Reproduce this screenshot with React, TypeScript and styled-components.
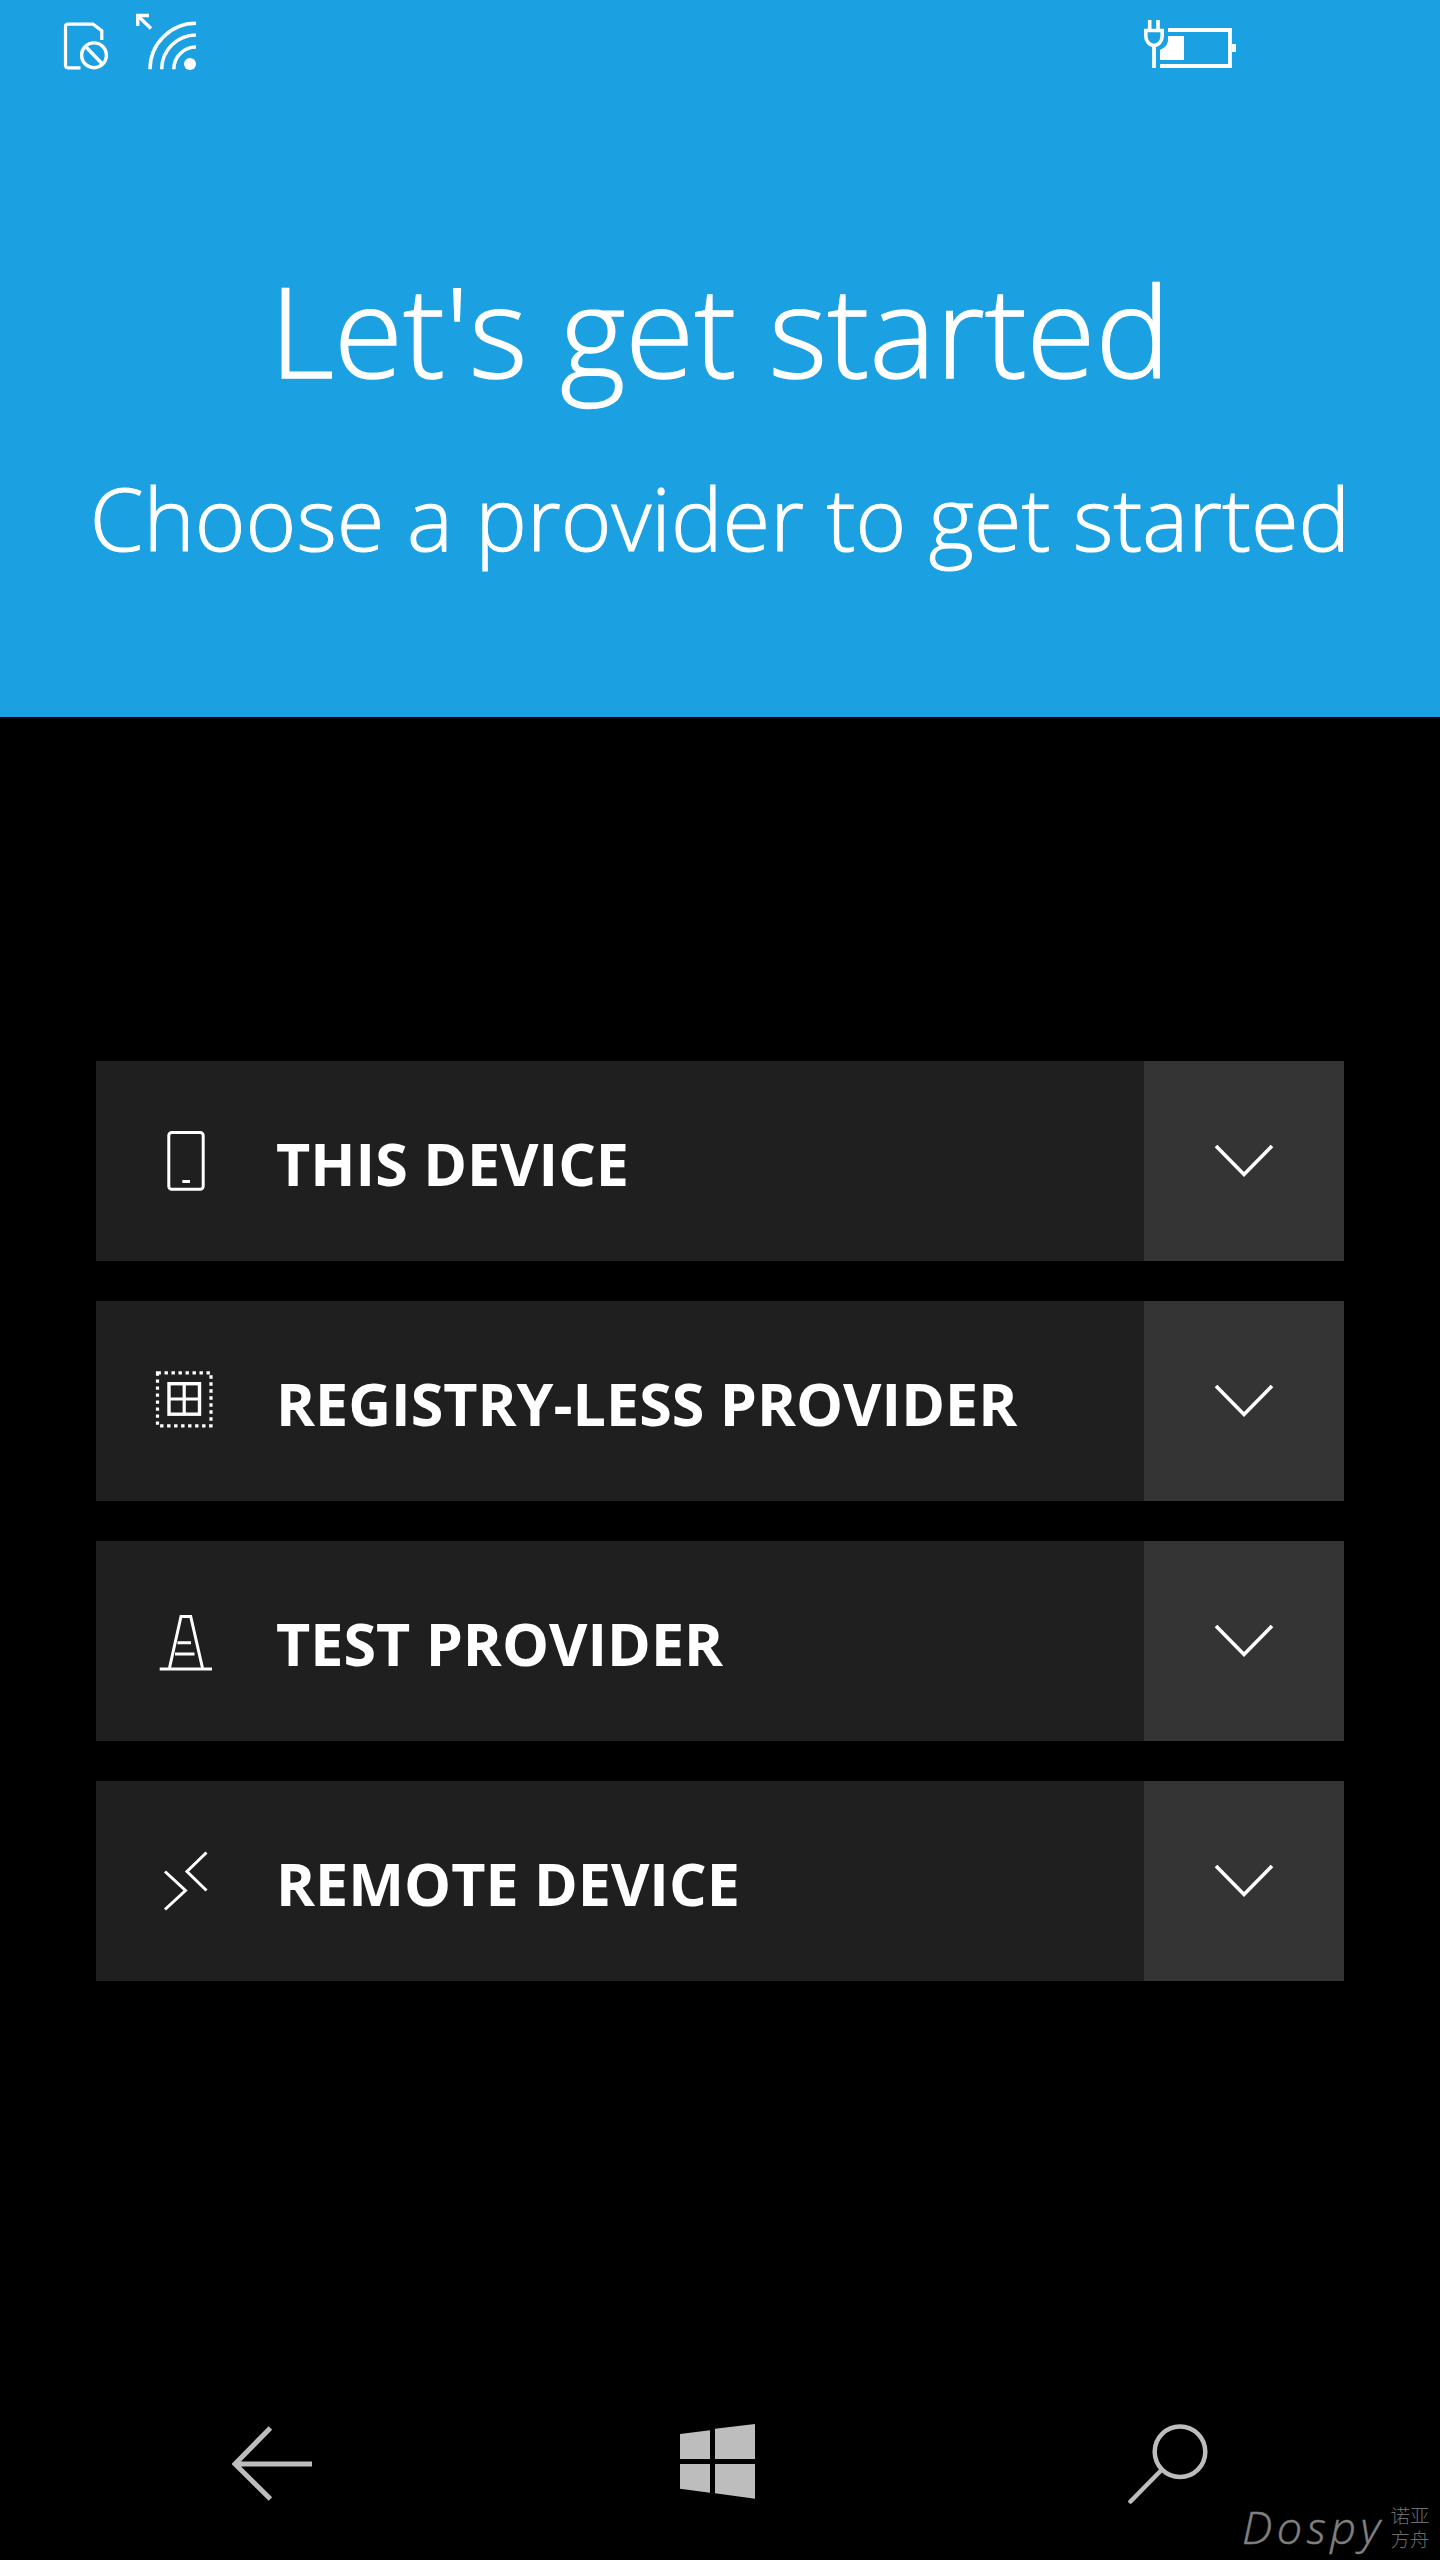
import React from "react";
import styled, { createGlobalStyle } from "styled-components";

const Global = createGlobalStyle`
  html, body { margin: 0; padding: 0; background: #000; }
  * { box-sizing: border-box; }
`;

const Page = styled.div`
  width: 1440px;
  height: 2560px;
  background: #000;
  display: flex;
  flex-direction: column;
  position: relative;
  overflow: hidden;
  font-family: "Open Sans", "Liberation Sans", sans-serif;
  color: #fff;
`;

const Header = styled.header`
  height: 717px;
  flex: none;
  background: #1ba1e2;
  display: flex;
  flex-direction: column;
  align-items: center;
`;

const StatusBar = styled.div`
  width: 100%;
  height: 80px;
  padding: 0 200px 0 60px;
  display: flex;
  justify-content: space-between;
`;

const StatusIcon = styled.svg`
  display: block;
  height: 80px;
  fill: none;
  stroke: #fff;
`;

const Title = styled.h1`
  margin: 165px 0 0;
  font-size: 125.5px;
  line-height: 170px;
  font-weight: 300;
  -webkit-text-stroke: 1.4px #fff;
  white-space: nowrap;
`;

const Subtitle = styled.h2`
  margin: 43px 0 0;
  font-size: 86.7px;
  line-height: 118px;
  font-weight: 300;
  -webkit-text-stroke: 1px #fff;
  white-space: nowrap;
`;

const List = styled.main`
  padding: 344px 96px 0;
  display: flex;
  flex-direction: column;
  gap: 40px;
`;

const Card = styled.div`
  height: 200px;
  background: #1f1f1f;
  display: flex;
  align-items: stretch;
`;

const CardIcon = styled.svg`
  flex: none;
  width: 180px;
  height: 200px;
  fill: none;
  stroke: #fff;
  stroke-width: 3;
`;

const Label = styled.span`
  flex: 1;
  align-self: center;
  padding-top: 4px;
  font-size: 59.2px;
  font-weight: 700;
  line-height: 82px;
  white-space: nowrap;
`;

const Expander = styled.div`
  flex: none;
  width: 200px;
  background: #343434;
  display: flex;
  align-items: center;
  justify-content: center;
`;

const Chevron = styled.svg`
  display: block;
  width: 64px;
  height: 40px;
  fill: none;
  stroke: #fff;
  stroke-width: 3.6;
`;

const NavBar = styled.nav`
  margin-top: auto;
  padding: 0 232px 36px;
  display: flex;
  justify-content: space-between;
`;

const NavIcon = styled.svg`
  display: block;
  width: 80px;
  height: 100px;
  fill: none;
  stroke: #bdbdbd;
`;

const Watermark = styled.div`
  position: absolute;
  left: 1242px;
  top: 2500px;
  display: flex;
  align-items: center;
  gap: 6px;
  color: #808080;
`;

const WatermarkBrand = styled.span`
  font-size: 45px;
  line-height: 54px;
  font-style: italic;
  font-weight: 300;
  letter-spacing: 4.5px;
  -webkit-text-stroke: 0.5px #808080;
`;

const WatermarkTag = styled.span`
  font-family: "Noto Sans CJK SC", sans-serif;
  font-size: 19.5px;
  line-height: 24px;
  font-weight: 300;
  color: #6c6c6c;
`;

const providers = [
  {
    label: "THIS DEVICE",
    top: 1061,
    icon: (
      <>
        <rect x="168.8" y="1132.5" width="34.4" height="56.7" rx="3" />
        <path d="M182.3 1181.5H190" />
      </>
    ),
  },
  {
    label: "REGISTRY-LESS PROVIDER",
    top: 1301,
    icon: (
      <>
        <rect x="157.5" y="1372.8" width="53.5" height="53" strokeDasharray="3.4 3.6" strokeWidth="3.2" />
        <rect x="169" y="1383.7" width="30.5" height="30.5" strokeWidth="3.4" />
        <path d="M184.2 1383.7V1414.2M169 1399H199.5" strokeWidth="3.2" />
      </>
    ),
  },
  {
    label: "TEST PROVIDER",
    top: 1541,
    icon: (
      <>
        <path d="M169.5 1668L181 1616.5H190.7L202.5 1668" />
        <path d="M159.7 1669H212M177.5 1642.7H191M175 1654H194.5" />
      </>
    ),
  },
  {
    label: "REMOTE DEVICE",
    top: 1781,
    icon: (
      <path d="M165 1871.5L185.5 1890.5L165 1909.5M206.5 1852.5L187 1871.5L206.5 1890.5" />
    ),
  },
];

export default function App() {
  return (
    <Page>
      <Global />
      <Header>
        <StatusBar>
          <StatusIcon width="140" viewBox="60 0 140 80">
            <path
              d="M80.5 67.8H68a2.5 2.5 0 0 1-2.500-2.500V26.700a2.500 2.500 0 0 1 2.500-2.500H93l8.800 6.500V40"
              strokeWidth="3.2"
            />
            <circle cx="94" cy="55.300" r="12.400" strokeWidth="3.400" />
            <path d="M86.500 47.500L101.700 63.200" strokeWidth="3.400" />
            <path d="M137.700 26V15.500H149" strokeWidth="3.400" />
            <path d="M138 16L151 28.500" strokeWidth="3.400" />
            <path
              d="M150 69.300A46 46 0 0 1 196 23.300M161.700 69.300A34.300 34.300 0 0 1 196 35M173.800 69.300A22.200 22.200 0 0 1 196 47.100"
              strokeWidth="3.500"
            />
            <circle cx="190" cy="64" r="6" fill="#fff" stroke="none" />
          </StatusIcon>
          <StatusIcon width="100" viewBox="1140 0 100 80">
            <path d="M1149.700 20V30M1158 20V30" strokeWidth="3.600" />
            <path d="M1145.800 30.500H1162.200V36A8.200 9.500 0 0 1 1145.800 36Z" strokeWidth="3.600" />
            <path d="M1154 45V68" strokeWidth="3.800" />
            <path d="M1168 30H1230V66H1160" strokeWidth="3.800" />
            <path d="M1232 44H1236V52H1232Z" fill="#fff" stroke="none" />
            <path d="M1168 36H1184V60H1160V50Q1167 47 1168 41Z" fill="#fff" stroke="none" />
          </StatusIcon>
        </StatusBar>
        <Title>Let's get started</Title>
        <Subtitle>Choose a provider to get started</Subtitle>
      </Header>
      <List>
        {providers.map((p) => (
          <Card key={p.label}>
            <CardIcon viewBox={`96 ${p.top} 180 200`}>{p.icon}</CardIcon>
            <Label>{p.label}</Label>
            <Expander>
              <Chevron viewBox="0 0 64 40">
                <path d="M4 5L32 33.500L60 5" />
              </Chevron>
            </Expander>
          </Card>
        ))}
      </List>
      <NavBar>
        <NavIcon viewBox="232 2424 80 100" strokeWidth="5">
          <path d="M270.400 2428L235 2464L270.400 2499M236 2464H312" />
        </NavIcon>
        <NavIcon viewBox="680 2424 80 100">
          <path
            d="M680 2434L710 2430.300V2459H680ZM715 2428.700L755 2424V2459H715ZM680 2464H710V2492.700L680 2488.700ZM715 2464H755V2498.700L715 2493.300Z"
            fill="#bdbdbd"
            stroke="none"
          />
        </NavIcon>
        <NavIcon viewBox="1128 2424 80 100" strokeWidth="4.500">
          <circle cx="1180" cy="2451.700" r="25.300" />
          <path d="M1160.500 2471L1130.500 2501.500" strokeLinecap="round" />
        </NavIcon>
      </NavBar>
      <Watermark>
        <WatermarkBrand>Dospy</WatermarkBrand>
        <WatermarkTag>
          诺亚
          <br />
          方舟
        </WatermarkTag>
      </Watermark>
    </Page>
  );
}
